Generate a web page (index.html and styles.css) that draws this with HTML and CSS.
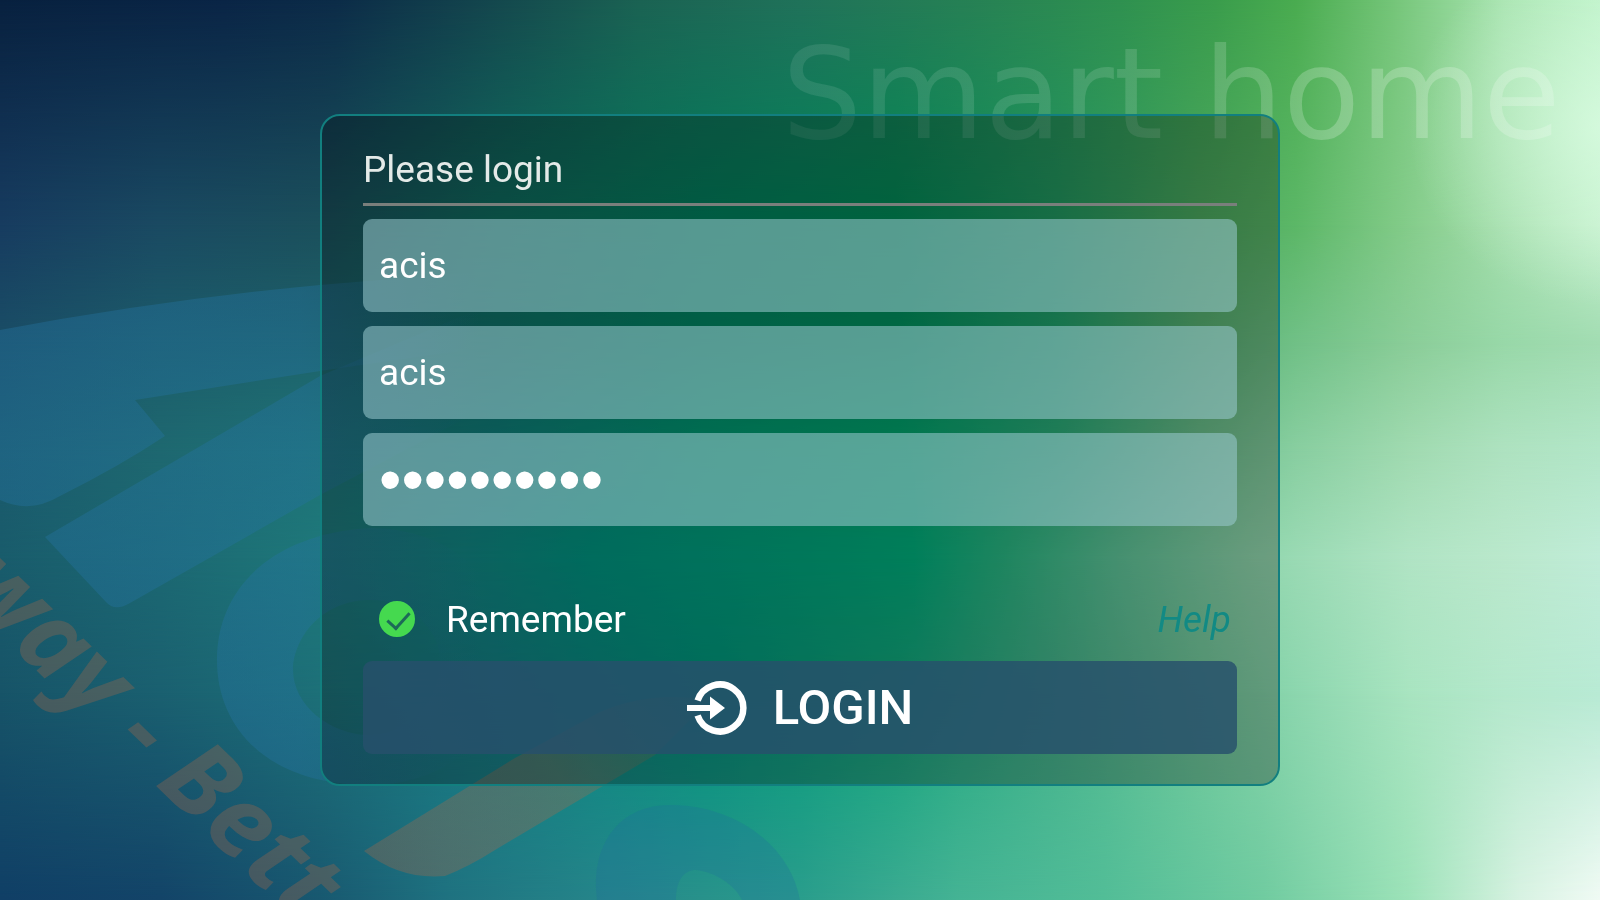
FILE: index.html
```html
<!DOCTYPE html>
<html lang="en">
  <head>
    <meta charset="UTF-8" />
    <meta name="viewport" content="width=device-width, initial-scale=1.0" />
    <title>Smart home - Login</title>
    <link rel="stylesheet" href="styles.css">
  </head>

  <body>
    <!-- Backdrop: colour bands, blended from top to bottom -->
    <div class="backdrop" aria-hidden="true">
      <div class="band band-1"></div>
      <div class="band band-2"></div>
      <div class="band band-3"></div>
      <div class="band band-4"></div>
      <div class="band band-5"></div>
      <div class="band band-6"></div>
      <div class="band band-7"></div>
      <div class="band glow"></div>

      <svg class="artwork" viewBox="0 0 1600 900" preserveAspectRatio="xMidYMid slice">
        <defs>
          <linearGradient id="titleFill" gradientUnits="userSpaceOnUse" x1="780" y1="0" x2="1570" y2="0">
            <stop offset="0" stop-color="#ffffff" stop-opacity="0.09" />
            <stop offset="0.5" stop-color="#ffffff" stop-opacity="0.14" />
            <stop offset="0.7" stop-color="#ffffff" stop-opacity="0.22" />
            <stop offset="1" stop-color="#ffffff" stop-opacity="0.2" />
          </linearGradient>
          <linearGradient id="blueFade" gradientUnits="userSpaceOnUse" x1="300" y1="0" x2="480" y2="0">
            <stop offset="0" stop-color="#2472a0" stop-opacity="0.4" />
            <stop offset="1" stop-color="#2472a0" stop-opacity="0" />
          </linearGradient>
          <linearGradient id="swooshFill" gradientUnits="userSpaceOnUse" x1="560" y1="780" x2="680" y2="700">
            <stop offset="0" stop-color="#a86848" stop-opacity="0.33" />
            <stop offset="1" stop-color="#a86848" stop-opacity="0.15" />
          </linearGradient>
        </defs>

        <path fill="url(#blueFade)" d="M0 330 Q160 300 320 285 L500 270 L500 345 L320 371 L135 400 L165 436 Q120 466 60 496 Q30 514 0 500 Z" />
        <path fill="url(#blueFade)" d="M500 300 L320 376 L45 537 L106 602 Q115 612 130 603 L320 495 L500 400 Z" />
        <path fill="url(#blueFade)" fill-rule="evenodd" d="M217 660 C217 590 270 534 370 528 C450 528 510 580 510 655 C510 730 450 785 370 785 C270 785 217 730 217 660 Z M293 670 C293 640 320 600 370 600 C410 600 440 630 440 660 C440 700 410 735 370 735 C330 735 293 705 293 670 Z" />
        <path class="ring" fill-rule="evenodd" d="M597 900 C590 850 615 805 670 805 C735 805 790 845 800 900 Z M676 900 C676 880 684 870 696 870 C715 872 735 885 742 900 Z" />
        <path fill="url(#swooshFill)" d="M364 851 L515 758 L600 712 Q650 690 710 700 L655 755 L495 850 Q470 866 445 876 Q400 880 364 851 Z" />

        <text class="slogan" transform="translate(-47 590) rotate(44)">way - Bett</text>
        <text class="title" x="782" y="138" fill="url(#titleFill)">Smart home</text>
      </svg>
    </div>

    <main class="login-card">
      <h1>Please login</h1>

      <form id="loginForm">
        <input type="text" id="server" aria-label="Server" value="acis" />
        <input type="text" id="username" aria-label="User name" value="acis" />
        <input type="password" id="password" aria-label="Password" value="0123456789" />

        <div class="options">
          <label class="remember" for="remember">
            <input type="checkbox" id="remember" checked />
            Remember
          </label>
          <a class="help" href="#">Help</a>
        </div>

        <button type="submit">
          <svg class="login-icon" viewBox="0 0 60 54" aria-hidden="true">
            <path d="M10.6 19.5 A23.5 23.5 0 1 1 10.6 34.5" fill="none" stroke="currentColor" stroke-width="6.5" />
            <path d="M0 24 H23 V15.5 L38 27 L23 38.5 V30 H0 Z" fill="currentColor" />
          </svg>
          LOGIN
        </button>
      </form>
    </main>
  </body>
</html>
```
FILE: styles.css
```css
* {
  box-sizing: border-box;
}

body {
  font-family: Roboto, "Liberation Sans", sans-serif;
  background-color: #1b6070;
  color: #ffffff;
  margin: 0;
  padding: 114px 0;
  min-height: 100vh;
}

/* Backdrop */
.backdrop {
  position: fixed;
  inset: 0;
  z-index: -1;
  overflow: hidden;
}

.band,
.artwork {
  position: absolute;
  inset: 0;
  width: 100%;
  height: 100%;
}

.band-1 {
  background: linear-gradient(90deg, #08213f 0%, #0a2546 14%, #0c2c48 21%, #123f4c 28%, #1b6353 40%, #20725a 50%, #268055 60%, #2f9150 70%, #3a9d4c 76%, #4aac50 81%, #74c578 87%, #a8e4b0 94%, #bdf2c8 100%);
}

.band-2 {
  background: linear-gradient(90deg, #173c60 0%, #1a4a62 10%, #1b505c 20%, #0f6c5e 31%, #007e5c 44%, #008956 56%, #209660 66%, #4ba85f 75%, #5cb767 81%, #84cc8a 88%, #a4deac 94%, #c4f0cc 100%);
  mask-image: linear-gradient(180deg, transparent 0%, #000 25%);
}

.band-3 {
  background: linear-gradient(90deg, #1a4e66 0%, #1c5c6a 10%, #1d626a 20%, #0f7068 31%, #008462 44%, #008f5e 56%, #20a06c 66%, #58b074 75%, #70c086 81%, #8acd98 88%, #98d8a8 94%, #a2dcb2 100%);
  mask-image: linear-gradient(180deg, transparent 25%, #000 38%);
}

.band-4 {
  background: linear-gradient(90deg, #1b5a6c 0%, #1e6870 10%, #1f7478 20%, #0f7f7c 31%, #009872 44%, #00a56e 56%, #2cac7a 66%, #6cc08e 75%, #88cea0 81%, #a0dab0 88%, #aee2c0 94%, #b2e6c8 100%);
  mask-image: linear-gradient(180deg, transparent 38%, #000 50%);
}

.band-5 {
  background: linear-gradient(90deg, #195c6c 0%, #1c6872 10%, #1e787a 20%, #128684 29%, #009480 37%, #00a47c 50%, #00ae7c 57%, #2cb884 63%, #60c69a 70%, #8ed6ac 78%, #9adab4 81%, #b0e4c4 88%, #bae8cc 94%, #c0ecd8 100%);
  mask-image: linear-gradient(180deg, transparent 50%, #000 62%);
}

.band-6 {
  background: linear-gradient(90deg, #175468 0%, #1a6070 10%, #1d7078 20%, #147e84 31%, #00957c 44%, #14a67c 56%, #46b48c 66%, #72ca9c 75%, #8cd6ae 81%, #a8e4c0 88%, #b4e8cc 94%, #b8ead4 100%);
  mask-image: linear-gradient(180deg, transparent 62%, #000 77%);
}

.band-7 {
  background: linear-gradient(90deg, #103f66 0%, #134468 10%, #185870 20%, #1f7280 28%, #26868a 38%, #2a9d8c 50%, #45b394 60%, #52bd97 69%, #70cba0 79%, #9ce2b8 88%, #d8f2e2 95%, #f0faf4 100%);
  mask-image: linear-gradient(180deg, transparent 77%, #000 100%);
}

.glow {
  background: radial-gradient(ellipse 12% 20% at 100% 14%, rgba(224, 255, 232, 0.6), rgba(224, 255, 232, 0));
}

.ring {
  fill: #206ea0;
  fill-opacity: 0.26;
}

.slogan {
  font-family: "Open Sans", "Noto Sans", sans-serif;
  font-size: 102px;
  font-weight: bold;
  font-style: italic;
  fill: #a86848;
  fill-opacity: 0.33;
}

.title {
  font-family: "DejaVu Sans", sans-serif;
  font-size: 126px;
}

/* Login card */
.login-card {
  width: 60%;
  min-width: 480px;
  margin: 0 auto;
  padding: 34px 41px 30px;
  background-color: rgba(0, 0, 0, 0.27);
  border: 2px solid #127f7f;
  border-radius: 20px;
}

h1 {
  margin: 0 0 13px;
  padding-bottom: 13px;
  border-bottom: 3px solid #7a7f7c;
  color: #e4eae8;
  font-size: 37px;
  font-weight: normal;
  line-height: 40px;
}

form {
  display: flex;
  flex-direction: column;
  gap: 14px;
}

input[type="text"],
input[type="password"] {
  width: 100%;
  height: 93px;
  padding: 0 16px;
  border: none;
  border-radius: 9px;
  outline: none;
  background-color: rgba(151, 198, 204, 0.57);
  color: #ffffff;
  font-family: inherit;
  font-size: 37px;
}

input[type="password"] {
  font-family: "Liberation Sans", sans-serif;
  font-size: 64px;
}

.options {
  display: flex;
  align-items: center;
  justify-content: space-between;
  height: 46px;
  margin: 56px 6px 5px 16px;
  font-size: 37px;
}

.remember {
  display: flex;
  align-items: center;
  gap: 31px;
  cursor: pointer;
}

.remember input {
  appearance: none;
  position: relative;
  width: 36px;
  height: 36px;
  margin: 0;
  border: 2px solid #45d94f;
  border-radius: 50%;
  cursor: pointer;
}

.remember input:checked {
  background-color: #45d94f;
}

.remember input:checked::after {
  content: "";
  position: absolute;
  left: 11px;
  top: 4px;
  width: 10px;
  height: 19px;
  border: solid #1c6a58;
  border-width: 0 3px 3px 0;
  transform: rotate(42deg);
}

.help {
  color: #128a84;
  font-style: italic;
  text-decoration: none;
}

button {
  display: flex;
  align-items: center;
  justify-content: center;
  gap: 26px;
  height: 93px;
  border: none;
  border-radius: 9px;
  background-color: rgba(39, 79, 107, 0.83);
  color: #ffffff;
  font-family: inherit;
  font-size: 49px;
  font-weight: 500;
  cursor: pointer;
}

button:hover {
  background-color: rgba(39, 79, 107, 0.95);
}

.login-icon {
  width: 60px;
  height: 54px;
}
```
